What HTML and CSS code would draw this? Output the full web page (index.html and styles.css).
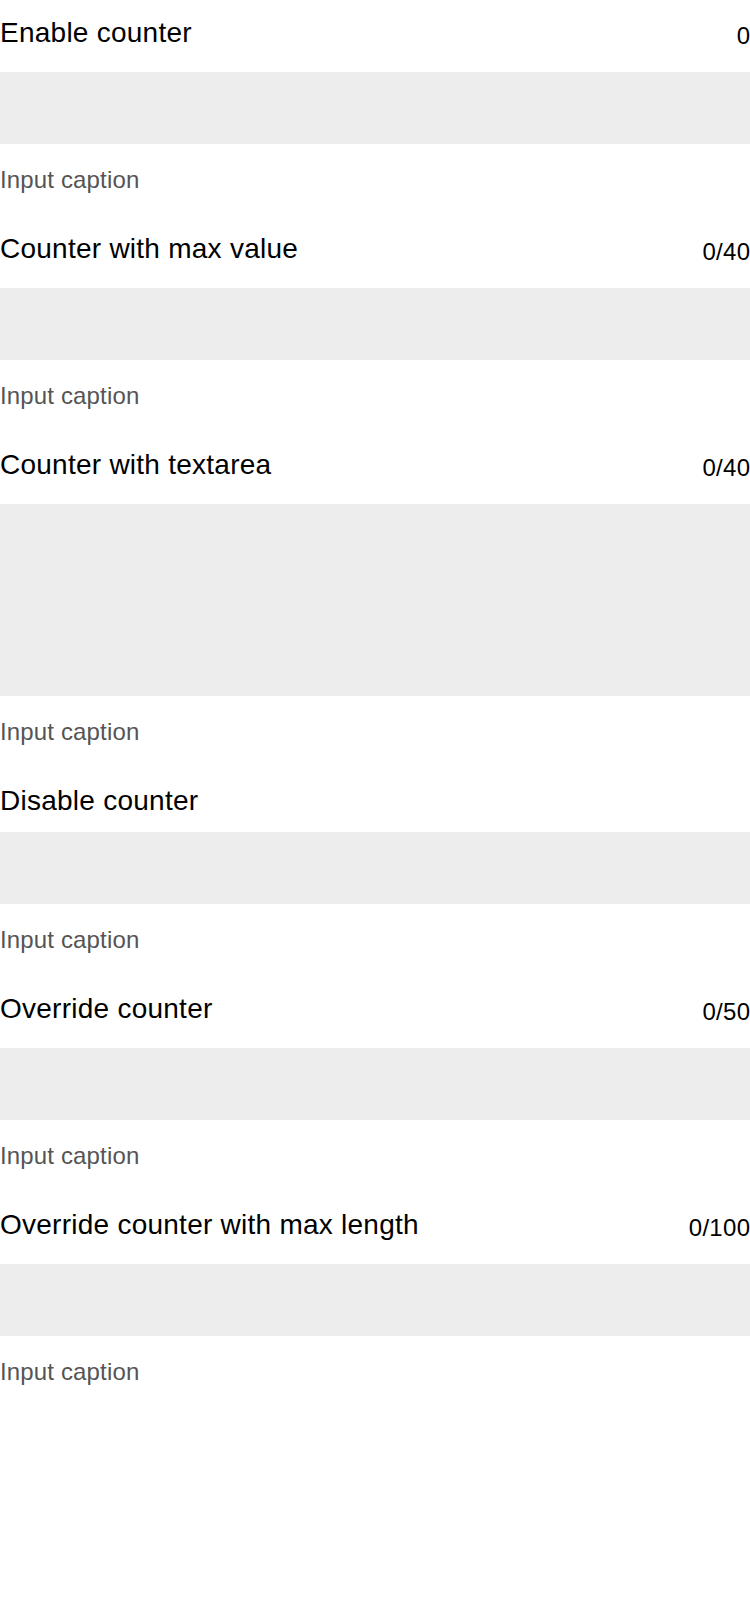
FILE: index.html
```html
<!DOCTYPE html>
<html lang="en">
<head>
<meta charset="utf-8">
<title>Counter inputs</title>
<link rel="stylesheet" href="styles.css">
</head>
<body>
<div class="form">
  <div class="field">
    <div class="field-head">
      <label class="field-label">Enable counter</label>
      <span class="field-counter">0</span>
    </div>
    <div class="field-input"></div>
    <div class="field-caption">Input caption</div>
  </div>
  <div class="field">
    <div class="field-head">
      <label class="field-label">Counter with max value</label>
      <span class="field-counter">0/40</span>
    </div>
    <div class="field-input"></div>
    <div class="field-caption">Input caption</div>
  </div>
  <div class="field">
    <div class="field-head">
      <label class="field-label">Counter with textarea</label>
      <span class="field-counter">0/40</span>
    </div>
    <div class="field-input field-textarea"></div>
    <div class="field-caption">Input caption</div>
  </div>
  <div class="field">
    <div class="field-head">
      <label class="field-label">Disable counter</label>
    </div>
    <div class="field-input"></div>
    <div class="field-caption">Input caption</div>
  </div>
  <div class="field">
    <div class="field-head">
      <label class="field-label">Override counter</label>
      <span class="field-counter">0/50</span>
    </div>
    <div class="field-input"></div>
    <div class="field-caption">Input caption</div>
  </div>
  <div class="field">
    <div class="field-head">
      <label class="field-label">Override counter with max length</label>
      <span class="field-counter">0/100</span>
    </div>
    <div class="field-input"></div>
    <div class="field-caption">Input caption</div>
  </div>
</div>
</body>
</html>
```
FILE: styles.css
```css
html, body {
  margin: 0;
  padding: 0;
  background: #ffffff;
}

body {
  font-family: "Liberation Sans", Arial, sans-serif;
  color: #000000;
}

.form {
  display: flex;
  flex-direction: column;
  width: 750px;
}

.field {
  display: flex;
  flex-direction: column;
}

.field-head {
  display: flex;
  justify-content: space-between;
  align-items: flex-start;
}

.field-label {
  font-size: 28px;
  line-height: 32px;
  letter-spacing: 0.25px;
  padding: 17px 0 15px;
  color: #000000;
}

.field-counter {
  font-size: 24px;
  line-height: 28px;
  letter-spacing: 0.3px;
  margin-right: -0.3px;
  padding: 22px 0 22px;
  color: #000000;
}

.field-input {
  height: 72px;
  background: #ededed;
}

.field-textarea {
  height: 192px;
}

.field-caption {
  font-size: 24px;
  line-height: 28px;
  letter-spacing: 0.15px;
  padding: 22px 0;
  color: #555555;
}
```
